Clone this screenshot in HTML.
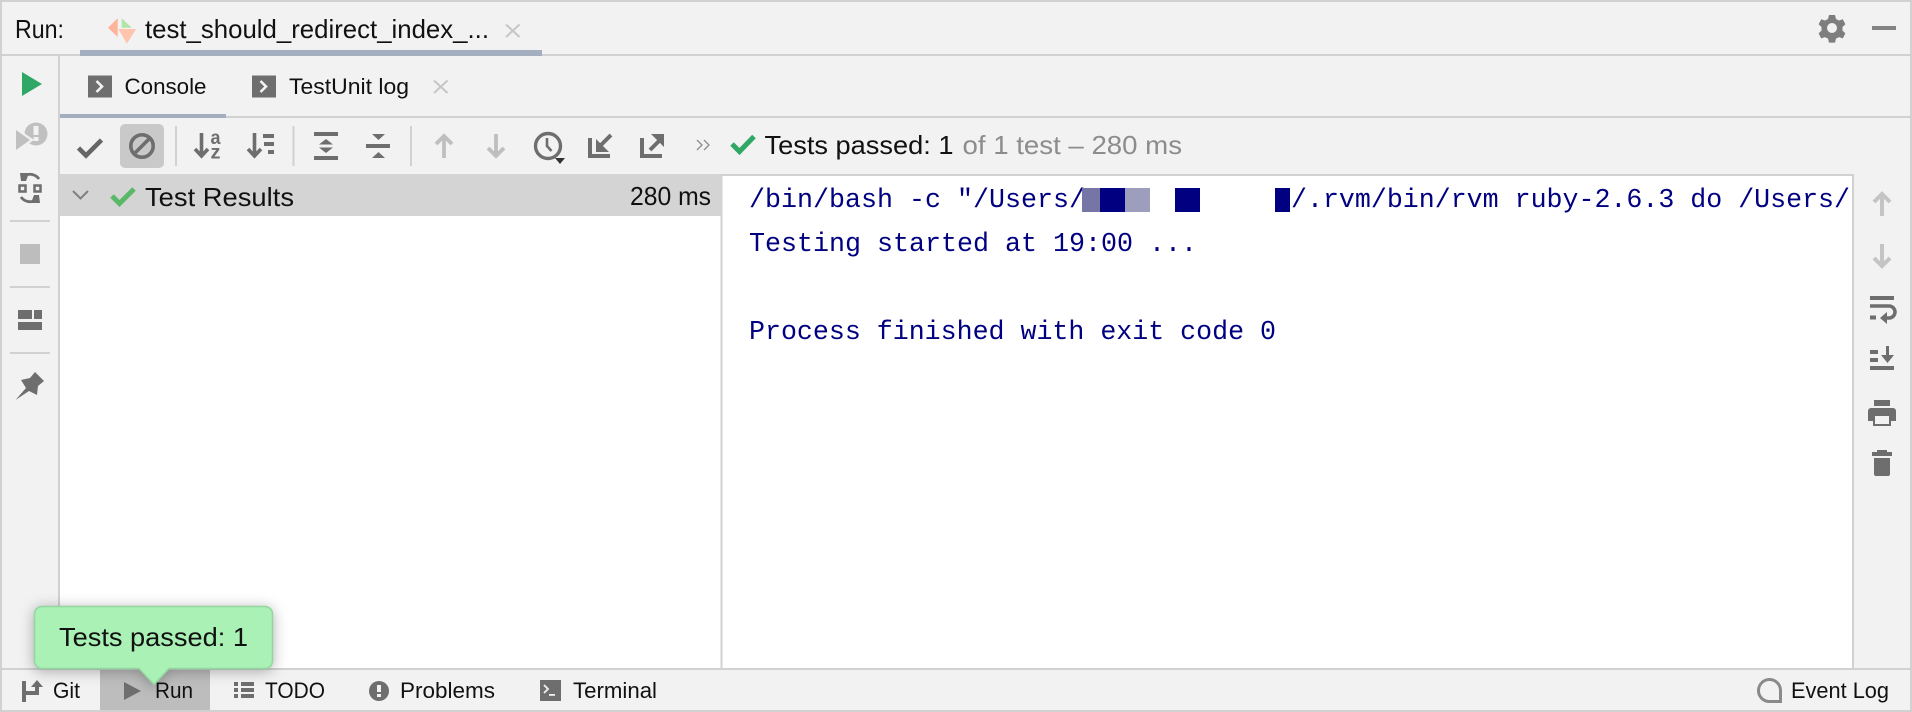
<!DOCTYPE html>
<html><head><meta charset="utf-8"><style>
html,body{margin:0;padding:0;background:#f2f2f2;width:1912px;height:712px;overflow:hidden}
svg{display:block}
text{font-family:"Liberation Sans",sans-serif;fill:#111}
.m{font-family:"Liberation Mono",monospace;font-size:26.6px;fill:#000080}
.s{font-size:22.5px}
.b{font-size:26px}
</style></head><body>
<svg width="1912" height="712" viewBox="0 0 1912 712" xmlns="http://www.w3.org/2000/svg">
<rect width="1912" height="712" fill="#f2f2f2"/>
<!-- white panels -->
<rect x="60" y="174" width="661" height="496" fill="#fff"/>
<rect x="722" y="176" width="1131" height="494" fill="#fff"/>
<!-- lines -->
<g fill="#d1d1d1">
<rect x="0" y="0" width="1912" height="2"/>
<rect x="0" y="0" width="2" height="712"/>
<rect x="1910" y="0" width="2" height="712"/>
<rect x="0" y="710" width="1912" height="2"/>
<rect x="0" y="54" width="1912" height="2"/>
<rect x="58" y="56" width="2" height="614"/>
<rect x="60" y="116" width="1852" height="2"/>
<rect x="720.500" y="174" width="1133" height="2"/>
<rect x="720.500" y="174" width="2" height="496"/>
<rect x="1852" y="174" width="2" height="496"/>
<rect x="0" y="668" width="1912" height="2"/>
<rect x="175" y="126" width="2" height="40"/>
<rect x="292.500" y="126" width="2" height="40"/>
<rect x="410" y="126" width="2" height="40"/>
<rect x="10" y="220" width="40" height="2"/>
<rect x="10" y="286" width="40" height="2"/>
<rect x="10" y="352" width="40" height="2"/>
</g>
<rect x="80" y="50" width="462" height="6" fill="#a3aebf"/>
<rect x="60" y="114" width="166" height="4" fill="#a3aebf"/>

<!-- top bar -->
<text x="15" y="38" class="b" textLength="49" lengthAdjust="spacingAndGlyphs">Run:</text>
<polygon points="108,27.700 117.700,18.300 117.700,37" fill="#ffb39b"/>
<polygon points="121.700,18.300 131.700,27.700 121.700,27.700" fill="#b2e3a8"/>
<polygon points="118.300,29 136,29 127,43.700" fill="#ffc4ae"/>
<text x="145" y="38" class="b" textLength="344" lengthAdjust="spacingAndGlyphs">test_should_redirect_index_...</text>
<path d="M506 24.500L519.500 37M519.500 24.500L506 37" stroke="#c6c6c6" stroke-width="2" fill="none"/>
<!-- gear -->
<path fill="#7e7e7e" fill-rule="evenodd" d="M1829 15h6l1 4 3 1.500 3.800-1.300 2.600 5-2.900 2.800v3.600l2.900 2.800-2.600 5-3.800-1.300-3 1.500-1 4h-6l-1-4-3-1.500-3.800 1.300-2.600-5 2.900-2.800v-3.600l-2.900-2.800 2.600-5 3.800 1.300 3-1.500zM1832 23a5 5 0 1 0 0 10a5 5 0 1 0 0-10z"/>
<rect x="1872" y="26" width="24" height="4" fill="#848484"/>

<!-- second row tabs -->
<rect x="88" y="75.500" width="24" height="22" fill="#6e6e6e"/>
<path d="M96.500 81l5.500 5.500-5.500 5.500" stroke="#f2f2f2" stroke-width="2.600" fill="none"/>
<text x="124.500" y="94" class="s" textLength="82" lengthAdjust="spacingAndGlyphs">Console</text>
<rect x="252" y="75.500" width="24" height="22" fill="#6e6e6e"/>
<path d="M260.500 81l5.500 5.500-5.500 5.500" stroke="#f2f2f2" stroke-width="2.600" fill="none"/>
<text x="289" y="94" class="s" textLength="120" lengthAdjust="spacingAndGlyphs">TestUnit log</text>
<path d="M434 80.500L447.500 93M447.500 80.500L434 93" stroke="#c6c6c6" stroke-width="2" fill="none"/>

<!-- left strip -->
<polygon points="22,72 42,84 22,96" fill="#2fa866"/>
<circle cx="36" cy="134" r="11.500" fill="#c0c0c0"/>
<polygon points="14,126 34,140 14,154" fill="#f2f2f2"/>
<polygon points="16,130 30,140 16,150" fill="#c0c0c0"/>
<rect x="33.500" y="126" width="5" height="9" fill="#f2f2f2"/>
<rect x="33.500" y="137" width="5" height="4" fill="#f2f2f2"/>
<!-- rerun failed -->
<g fill="none" stroke="#6e6e6e" stroke-width="2.800">
<path d="M24 176a11 11 0 0 1 15 3"/>
<path d="M36 200a11 11 0 0 1-15-3"/>
<rect x="19.500" y="185.500" width="6" height="6" stroke-width="2.500"/>
<rect x="34.500" y="185.500" width="6" height="6" stroke-width="2.500"/>
</g>
<polygon points="20,173 29,173 26,181 21,181" fill="#6e6e6e"/>
<polygon points="40,203 31,203 34,195 39,195" fill="#6e6e6e"/>
<rect x="20" y="244" width="20" height="20" fill="#bdbdbd"/>
<g fill="#6e6e6e">
<rect x="18" y="310" width="14" height="9"/>
<rect x="34" y="310" width="8" height="9"/>
<rect x="18" y="322" width="24" height="8"/>
<polygon points="15.500,400 26,388 21,380 30,378 35,372 44,381 38,386 37,395 29,391"/>
</g>

<!-- toolbar -->
<rect x="120" y="124" width="44" height="44" rx="5" fill="#c9c9c9"/>
<path d="M78.500 148l7.500 7.500 15.500-15.500" stroke="#666" stroke-width="4.600" fill="none"/>
<circle cx="142" cy="146" r="11.200" stroke="#6e6e6e" stroke-width="3.600" fill="none"/>
<path d="M134 154l16-16" stroke="#6e6e6e" stroke-width="3.600"/>
<g stroke="#6e6e6e" stroke-width="3.600" fill="none">
<path d="M201.500 133v22M195 149l6.500 7 6.500-7"/>
<path d="M254.500 133v22M248 149l6.500 7 6.500-7"/>
</g>
<text x="210.500" y="144" style="font-size:19px;font-weight:bold;fill:#6e6e6e" textLength="10" lengthAdjust="spacingAndGlyphs">a</text>
<text x="210.500" y="158.500" style="font-size:19px;font-weight:bold;fill:#6e6e6e" textLength="10" lengthAdjust="spacingAndGlyphs">z</text>
<g fill="#6e6e6e">
<rect x="263" y="134" width="11" height="4"/>
<rect x="264" y="142" width="10" height="4"/>
<rect x="268" y="150" width="6" height="4"/>
<rect x="314" y="132" width="24" height="4"/>
<rect x="314" y="156" width="24" height="4"/>
<polygon points="326,139 333,144.500 319,144.500"/>
<polygon points="326,153 333,147.500 319,147.500"/>
<rect x="366" y="144" width="24" height="4"/>
<polygon points="372,134 385,134 378.500,140"/>
<polygon points="372,158 385,158 378.500,152"/>
</g>
<g stroke="#bfbfbf" stroke-width="3.800" fill="none">
<path d="M444 158v-22M436 144l8-8 8 8"/>
<path d="M496 134v22M488 148l8 8 8-8"/>
</g>
<circle cx="548" cy="146" r="12.500" stroke="#6e6e6e" stroke-width="3.400" fill="none"/>
<path d="M547 138v8l4.500 5" stroke="#6e6e6e" stroke-width="2.600" fill="none"/>
<polygon points="555,158 565,158 560,164" fill="#333"/>
<g stroke="#6e6e6e" fill="none">
<path d="M590 138v18h20" stroke-width="4"/>
<path d="M611 135l-11 11" stroke-width="4"/>
</g>
<polygon points="596,139 596,152 609,152" fill="#6e6e6e"/>
<g stroke="#6e6e6e" fill="none">
<path d="M642 138v18h20" stroke-width="4"/>
<path d="M650 150l11-11" stroke-width="4"/>
</g>
<polygon points="664,134 651,134 664,147" fill="#6e6e6e"/>
<path d="M697 140l5 5-5 5M704 140l5 5-5 5" stroke="#8c8c8c" stroke-width="1.300" fill="none"/>
<path d="M732 144l7.500 7.500L754 136.500" stroke="#2fa866" stroke-width="5" fill="none"/>
<text x="764.500" y="154" class="b" textLength="189" lengthAdjust="spacingAndGlyphs">Tests passed: 1</text>
<text x="962.500" y="154" class="b" style="fill:#8c8c8c" textLength="219.500" lengthAdjust="spacingAndGlyphs">of 1 test – 280 ms</text>

<!-- tree row -->
<rect x="60" y="174" width="661" height="42" fill="#d4d4d4"/>
<path d="M73 191l7.500 7.500 7.500-7.500" stroke="#7f7f7f" stroke-width="2" fill="none"/>
<path d="M112 196l7.500 7.500L134 189" stroke="#59b968" stroke-width="5" fill="none"/>
<text x="145" y="206" class="b" textLength="149" lengthAdjust="spacingAndGlyphs">Test Results</text>
<text x="630" y="205" class="b" textLength="81" lengthAdjust="spacingAndGlyphs">280 ms</text>

<!-- console -->
<text x="749" y="207" class="m" textLength="336" lengthAdjust="spacingAndGlyphs">/bin/bash -c "/Users/</text>
<rect x="1082" y="188" width="18" height="24" fill="#7676a6"/>
<rect x="1100" y="188" width="25" height="24" fill="#000080"/>
<rect x="1125" y="188" width="25" height="24" fill="#9d9dbd"/>
<rect x="1175" y="188" width="25" height="24" fill="#000080"/>
<rect x="1275" y="188" width="15" height="24" fill="#000080"/>
<text x="1291" y="207" class="m" textLength="559" lengthAdjust="spacingAndGlyphs">/.rvm/bin/rvm ruby-2.6.3 do /Users/</text>
<text x="749" y="251" class="m" textLength="448" lengthAdjust="spacingAndGlyphs">Testing started at 19:00 ...</text>
<text x="749" y="339" class="m" textLength="527" lengthAdjust="spacingAndGlyphs">Process finished with exit code 0</text>

<!-- right strip -->
<g stroke="#c4c4c4" stroke-width="4" fill="none">
<path d="M1882 216v-22M1874 202l8-8 8 8"/>
<path d="M1882 244v22M1874 258l8 8 8-8"/>
</g>
<g fill="#6e6e6e">
<rect x="1870" y="296" width="24" height="4"/>
<rect x="1870" y="315.500" width="6" height="4"/>
<polygon points="1887,312 1887,324 1880,318"/>
<rect x="1870" y="350" width="8" height="4"/>
<rect x="1870" y="358" width="8" height="4"/>
<rect x="1870" y="366" width="24" height="4"/>
<rect x="1886" y="346" width="3" height="12"/>
<polygon points="1881,355 1894,355 1887.500,363"/>
<rect x="1874" y="400" width="16" height="6"/>
<path fill-rule="evenodd" d="M1868 411a3 3 0 0 1 3-3h22a3 3 0 0 1 3 3v10h-5v5h-18v-5h-5zM1875 416v8h14v-8z"/>
<rect x="1872" y="452" width="20" height="4"/>
<rect x="1877" y="450" width="10" height="3"/>
<path d="M1874 458h16v16a2 2 0 0 1-2 2h-12a2 2 0 0 1-2-2z"/>
</g>
<path d="M1870 306h19a6 6 0 0 1 0 12h-4" stroke="#6e6e6e" stroke-width="3.500" fill="none"/>

<!-- bottom bar -->
<rect x="100" y="670" width="110" height="40" fill="#bdbdbd"/>
<g fill="#6e6e6e">
<rect x="22" y="681" width="4" height="21"/>
<path d="M26 691h9v-5h4v9H26z"/>
<polygon points="31,687 37,680 43,687"/>
<polygon points="124,682 141,691 124,700"/>
<rect x="234" y="682" width="4" height="4"/>
<rect x="241" y="682" width="13" height="4"/>
<rect x="234" y="688" width="4" height="4"/>
<rect x="241" y="688" width="13" height="4"/>
<rect x="234" y="694" width="4" height="4"/>
<rect x="241" y="694" width="13" height="4"/>
<circle cx="379" cy="691" r="10"/>
<rect x="540" y="680" width="21" height="21"/>
</g>
<rect x="377" y="685" width="4" height="7" fill="#f2f2f2"/>
<rect x="377" y="694" width="4" height="3" fill="#f2f2f2"/>
<path d="M544 685l4 4-4 4" stroke="#f2f2f2" stroke-width="1.800" fill="none"/>
<rect x="549" y="694" width="6" height="1.800" fill="#f2f2f2"/>
<text x="53" y="698" class="s" textLength="27" lengthAdjust="spacingAndGlyphs">Git</text>
<text x="155" y="698" class="s" textLength="38" lengthAdjust="spacingAndGlyphs">Run</text>
<text x="265" y="698" class="s" textLength="60" lengthAdjust="spacingAndGlyphs">TODO</text>
<text x="400" y="698" class="s" textLength="95" lengthAdjust="spacingAndGlyphs">Problems</text>
<text x="573" y="698" class="s" textLength="84" lengthAdjust="spacingAndGlyphs">Terminal</text>
<path d="M1780.500 701.500h-12a11 11 0 1 1 12-11z" stroke="#8a8a8a" stroke-width="3" fill="none"/>
<text x="1791" y="698" class="s" textLength="98" lengthAdjust="spacingAndGlyphs">Event Log</text>

<!-- tooltip -->
<g style="filter:drop-shadow(0 2px 7px rgba(0,0,0,.3))">
<path d="M42 606.500h223a7.500 7.500 0 0 1 7.500 7.500v47a7.500 7.500 0 0 1-7.500 7.500h-96l-15 16-15-16H42a7.500 7.500 0 0 1-7.500-7.500v-47a7.500 7.500 0 0 1 7.500-7.500z" fill="#a9f1b4" stroke="#94d6a1" stroke-width="1.500"/>
</g>
<text x="59" y="646" class="b" textLength="189" lengthAdjust="spacingAndGlyphs">Tests passed: 1</text>
</svg>
</body></html>
